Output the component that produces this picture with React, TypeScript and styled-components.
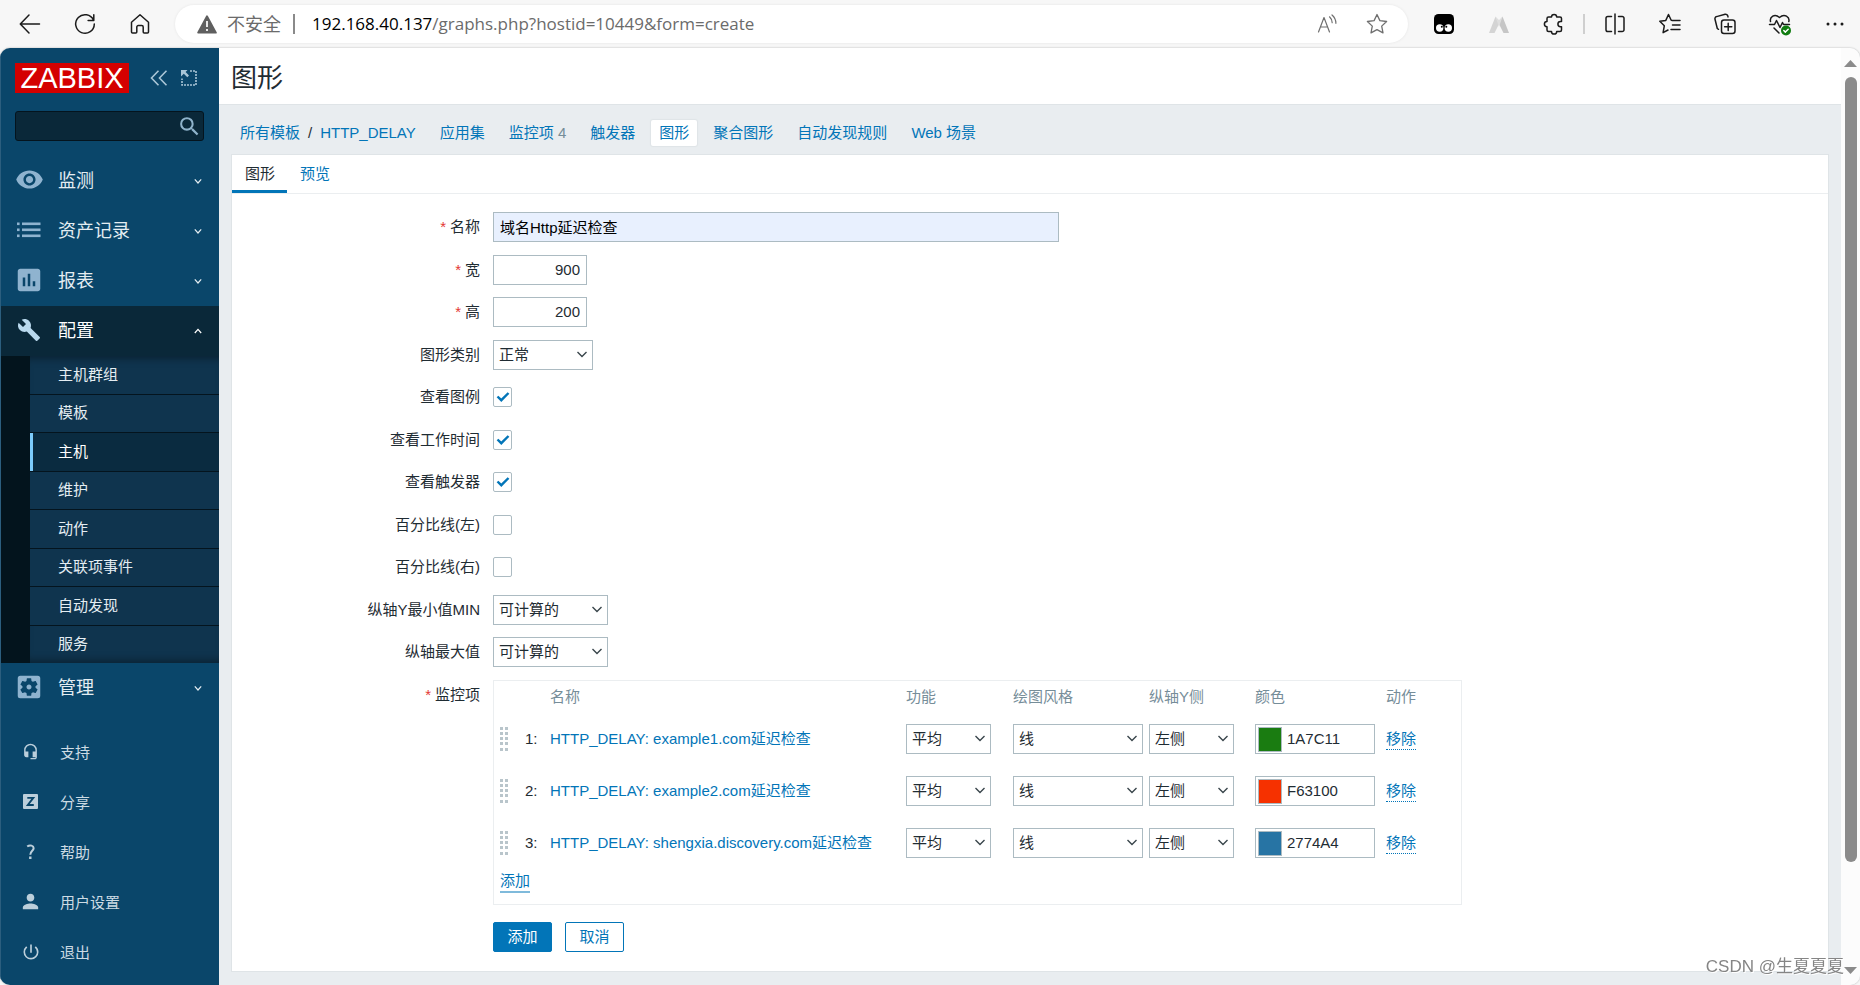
import React from "react";
import styled, { createGlobalStyle, css } from "styled-components";
import {
  MdVisibility,
  MdAssessment,
  MdBuild,
  MdSettingsApplications,
  MdHeadsetMic,
  MdPerson,
  MdPowerSettingsNew,
  MdSearch,
} from "react-icons/md";

const sans = `"Liberation Sans", "Noto Sans CJK SC", sans-serif`;
const chromeFont = `"Open Sans", "Noto Sans CJK SC", sans-serif`;

const GlobalStyle = createGlobalStyle`
  * { box-sizing: border-box; }
  body { margin: 0; background: #f7f7f7; font: 15px/20px ${sans}; color: #1f2c33; }
  button, input, select { font: inherit; color: inherit; margin: 0; }
  a { color: #0275b8; text-decoration: none; }
  svg { display: block; flex: none; }
`;

/* ---------- browser chrome ---------- */

const Window = styled.div`
  display: flex;
  flex-direction: column;
  min-height: 100vh;
`;

const Toolbar = styled.header`
  display: flex;
  align-items: center;
  height: 48px;
  padding: 0 7px 0 11px;
  background: #f7f7f7;
  color: #1b1b1b;
`;

const IconButton = styled.button`
  display: flex;
  align-items: center;
  justify-content: center;
  width: 37px;
  height: 36px;
  padding: 0;
  border: 0;
  background: none;
  color: inherit;
`;

const ButtonGroup = styled.div`
  display: flex;
  align-items: center;
  gap: 18px;
`;

const AddressBar = styled.div`
  display: flex;
  align-items: center;
  flex: 1;
  height: 38px;
  margin: 0 17px;
  padding: 0 13px 0 22px;
  border-radius: 19px;
  background: #fff;
  box-shadow: 0 0 3px rgba(0, 0, 0, 0.08);
  font: 17px/24px ${chromeFont};
  color: #6b6b6b;
`;

const Security = styled.span`
  display: flex;
  align-items: center;
  gap: 10px;
  font-size: 18px;
`;

const Divider = styled.span`
  width: 2px;
  height: 20px;
  margin: 0 11px;
  background: #cfcfcf;
`;

const UrlDivider = styled(Divider)`
  margin: 0 17px 0 12px;
  background: #8a8a8a;
`;

const Url = styled.span`
  flex: 1;
  white-space: nowrap;
  b { font-weight: 400; color: #000; }
`;

const AddressTools = styled.div`
  display: flex;
  gap: 12px;
  color: #6f6f6f;
`;

const Viewport = styled.div`
  display: flex;
  flex: 1;
  border-radius: 10px;
  overflow: hidden;
  background: #e9edf0;
  box-shadow: 0 0 2px rgba(0, 0, 0, 0.3);
`;

const Scrollbar = styled.div`
  display: flex;
  flex-direction: column;
  align-items: center;
  justify-content: space-between;
  width: 19px;
  padding: 12px 0 11px;
  background: #fcfcfc;
  color: #8b8b8b;
`;

const ScrollTrack = styled.div`
  flex: 1;
  width: 12px;
  margin: 10px 0 8px;
`;

const ScrollThumb = styled.div`
  height: 89%;
  border-radius: 6px;
  background: #8b8b8b;
`;

/* ---------- sidebar ---------- */

const Sidebar = styled.aside`
  display: flex;
  flex-direction: column;
  width: 219px;
  flex: none;
  border-left: 1px solid #2c5e7e;
  background: #0a466a;
  color: #fff;
`;

const Brand = styled.div`
  display: flex;
  align-items: center;
  height: 30px;
  margin: 15px 14px 18px;
  color: #a9c5d6;
`;

const Logo = styled.a`
  flex: none;
  width: 114px;
  height: 30px;
  margin-right: 15px;
  background: #d40000;
  color: #fff;
  font-size: 29px;
  line-height: 30px;
  text-align: center;
`;

const BrandButton = styled(IconButton)`
  width: 30px;
  height: 30px;
`;

const SearchBox = styled.form`
  display: flex;
  align-items: center;
  height: 30px;
  margin: 0 15px 0 14px;
  border: 1px solid #04141e;
  border-radius: 3px;
  background: #0a2839;
  color: #8fb3cb;
  input {
    flex: 1;
    min-width: 0;
    padding: 0 8px;
    border: 0;
    background: none;
    outline: none;
  }
`;

const SearchButton = styled(IconButton)`
  width: 28px;
  height: 28px;
`;

const Menu = styled.ul`
  margin: 15px 0;
  padding: 0;
  list-style: none;
`;

const MenuLink = styled.a<{ $open?: boolean }>`
  display: flex;
  align-items: center;
  height: 50px;
  padding: 0 17px 0 14px;
  background: ${(p) => (p.$open ? "#0a2839" : "transparent")};
  color: ${(p) => (p.$open ? "#fff" : "#e4edf2")};
  font-size: 18px;
  line-height: 24px;
  span:first-child {
    display: flex;
    justify-content: center;
    width: 28px;
    margin-right: 15px;
    padding-bottom: 3px;
    color: ${(p) => (p.$open ? "#b9d9ee" : "#8fb3cf")};
  }
  > svg { margin-left: auto; }
`;

const SubMenu = styled.ul`
  display: flex;
  flex-direction: column;
  height: 307px;
  margin: 0;
  padding: 0 0 0 29px;
  list-style: none;
  background: #03141d;
`;

const SubItem = styled.li<{ $active?: boolean }>`
  flex: 1;
  background: ${(p) => (p.$active ? "#0a2b40" : "#0f344e")};
  & + & { border-top: 1px solid #04141e; }
  &:first-child { box-shadow: inset 0 8px 8px -6px rgba(0, 0, 0, 0.4); }
  &:last-child { box-shadow: inset 0 -8px 8px -6px rgba(0, 0, 0, 0.4); }
  a {
    display: flex;
    align-items: center;
    height: 100%;
    padding-left: 25px;
    border-left: 3px solid ${(p) => (p.$active ? "#7ccbfb" : "transparent")};
    color: ${(p) => (p.$active ? "#fff" : "#e4edf2")};
  }
`;

const UserMenu = styled.ul`
  margin: 0 0 7px;
  padding: 0;
  list-style: none;
  a {
    display: flex;
    align-items: center;
    height: 50px;
    padding-left: 18px;
    color: #cddbe4;
  }
  span:first-child {
    display: flex;
    justify-content: center;
    width: 23px;
    margin-right: 18px;
    padding-bottom: 3px;
    color: #bccfdb;
  }
`;

/* ---------- main area ---------- */

const Main = styled.main`
  display: flex;
  flex-direction: column;
  flex: 1;
  min-width: 0;
`;

const PageHeader = styled.div`
  height: 57px;
  padding: 13px 12px;
  border-bottom: 1px solid #dfe4e7;
  background: #fff;
  h1 {
    margin: 0;
    font-size: 26px;
    line-height: 34px;
    font-weight: 400;
  }
`;

const FilterNav = styled.nav`
  display: flex;
  align-items: center;
  gap: 8px;
  height: 26px;
  margin: 15px 13px 8px;
`;

const NavLink = styled.a<{ $active?: boolean }>`
  padding: 3px 8px;
  border-radius: 2px;
  white-space: nowrap;
  ${(p) =>
    p.$active &&
    css`
      background: #fff;
      box-shadow: 0 0 1px 1px #dfe4e7;
    `}
  small { font-size: 15px; color: #768d99; }
`;

const Crumbs = styled.span`
  display: flex;
  gap: 8px;
  padding: 0 8px;
  white-space: nowrap;
`;

const Card = styled.section`
  flex: 1;
  margin: 0 12px 13px;
  padding-bottom: 18px;
  border: 1px solid #dfe4e7;
  background: #fff;
`;

const Tabs = styled.div`
  display: flex;
  height: 39px;
  border-bottom: 1px solid #ebeef0;
`;

const Tab = styled.button<{ $active?: boolean }>`
  height: 38px;
  padding: 3px 12px 0 13px;
  border: 0;
  border-bottom: 3px solid ${(p) => (p.$active ? "#0275b8" : "transparent")};
  background: none;
  color: ${(p) => (p.$active ? "#1f2c33" : "#0275b8")};
`;

const Form = styled.form`
  padding-top: 18px;
`;

const Row = styled.div`
  display: grid;
  grid-template-columns: 248px minmax(0, 1fr);
  column-gap: 13px;
  min-height: 30px;
  margin-bottom: 12px;
  &:nth-child(odd) { margin-bottom: 13px; }
  &:nth-last-child(2) { margin-bottom: 17px; }
  &:last-child { margin-bottom: 0; }
`;

const Field = styled.div`
  display: flex;
  align-items: center;
  gap: 13px;
`;

const labelStyle = css<{ $required?: boolean }>`
  line-height: 30px;
  height: 30px;
  text-align: right;
  white-space: nowrap;
  ${(p) =>
    p.$required &&
    css`
      &::before {
        content: "*";
        margin-right: 4px;
        color: #e33734;
      }
    `}
`;
const Label = styled.label<{ $required?: boolean }>`${labelStyle}`;
const Caption = styled.span<{ $required?: boolean }>`${labelStyle}`;

const TextInput = styled.input<{ $width: number; $filled?: boolean; $number?: boolean }>`
  width: ${(p) => p.$width}px;
  max-width: 100%;
  height: 30px;
  padding: 0 6px 1px;
  border: 1px solid #acbbc2;
  background: ${(p) => (p.$filled ? "#e8f0fe" : "#fff")};
  color: ${(p) => (p.$filled ? "#000" : "inherit")};
  text-align: ${(p) => (p.$number ? "right" : "left")};
`;

const SelectBox = styled.span<{ $width: number }>`
  display: grid;
  width: ${(p) => p.$width}px;
  height: 30px;
  align-items: center;
  > * { grid-area: 1 / 1; }
  select {
    width: 100%;
    height: 30px;
    padding: 0 5px;
    border: 1px solid #acbbc2;
    border-radius: 0;
    background: #fff;
    appearance: none;
  }
  svg { justify-self: end; margin-right: 5px; pointer-events: none; }
`;

const CheckBox = styled.span`
  display: grid;
  place-items: center;
  > * { grid-area: 1 / 1; }
  input {
    width: 19px;
    height: 20px;
    border: 1px solid #acbbc2;
    border-radius: 2px;
    background: #fff;
    appearance: none;
  }
  svg { visibility: hidden; pointer-events: none; }
  input:checked + svg { visibility: visible; }
`;

const ItemsPanel = styled.div`
  width: 969px;
  max-width: 100%;
  min-height: 225px;
  padding: 0 6px;
  border: 1px solid #ebeef0;
`;

const ItemsTable = styled.table`
  width: 100%;
  table-layout: fixed;
  border-collapse: collapse;
  th {
    height: 32px;
    padding: 0;
    color: #768d99;
    font-weight: 400;
    text-align: left;
    vertical-align: middle;
  }
  td { height: 52px; padding: 0; vertical-align: middle; }
  tfoot td { height: 26px; }
`;

const ColorField = styled.label`
  display: flex;
  align-items: center;
  width: 120px;
  height: 30px;
  padding: 0 2px;
  border: 1px solid #acbbc2;
  input {
    flex: 1;
    min-width: 0;
    padding: 0 5px;
    border: 0;
    background: none;
  }
`;

const Swatch = styled.span<{ $color: string }>`
  width: 24px;
  height: 25px;
  border: 1px solid #acbbc2;
  background: #${(p) => p.$color};
`;

const TextButton = styled.button<{ $solid?: boolean }>`
  padding: 0;
  border: 0;
  border-bottom: ${(p) => (p.$solid ? "2px solid #7fbadb" : "1px dotted #0275b8")};
  background: none;
  color: #0275b8;
`;

const ActionButton = styled.button<{ $primary?: boolean }>`
  width: 59px;
  height: 30px;
  padding: 0;
  border: 1px solid #0275b8;
  border-radius: 2px;
  background: ${(p) => (p.$primary ? "#0275b8" : "#fff")};
  color: ${(p) => (p.$primary ? "#fff" : "#0275b8")};
`;

const Watermark = styled.div`
  position: fixed;
  right: 16px;
  bottom: 6px;
  color: #858585;
  font-size: 17px;
  line-height: 24px;
  text-shadow: 1px 1px 0 #fff;
  pointer-events: none;
`;

/* ---------- drawings ---------- */

type LineIconProps = { size?: number; width?: number; children: React.ReactNode };
const LineIcon = ({ size = 24, width = 1.5, children }: LineIconProps) => (
  <svg width={size} height={size} viewBox="0 0 24 24" fill="none" stroke="currentColor" strokeWidth={width} strokeLinecap="round" strokeLinejoin="round" aria-hidden="true">
    {children}
  </svg>
);

const Chevron = ({ up = false, size = 8 }: { up?: boolean; size?: number }) => (
  <svg width={size} height={size} viewBox="0 0 10 10" fill="none" stroke="currentColor" strokeWidth="1.5" aria-hidden="true">
    <path d={up ? "M1 7.5 5 3l4 4.5" : "M1 3l4 4.5L9 3"} />
  </svg>
);

const SelectArrow = () => (
  <svg width="12" height="12" viewBox="0 0 12 12" fill="none" stroke="#3a464c" strokeWidth="1.4" aria-hidden="true">
    <path d="M1.500 3 6 7.500 10.500 3" />
  </svg>
);

const CheckMark = () => (
  <svg width="14" height="12" viewBox="0 0 14 12" fill="none" stroke="#0275b8" strokeWidth="2.4" aria-hidden="true">
    <path d="M1.5 5.5 5.3 9.2 12.5 2" />
  </svg>
);

const ListIcon = () => (
  <svg width="24" height="16" viewBox="0 0 24 16" fill="currentColor" aria-hidden="true">
    {[1, 7, 13].map((y) => (
      <g key={y}>
        <rect x="0" y={y - 0.5} width="2.6" height="2.6" />
        <rect x="5" y={y - 0.5} width="18.5" height="2.6" />
      </g>
    ))}
  </svg>
);

const ShareIcon = () => (
  <svg width="15" height="15" viewBox="0 0 15 15" aria-hidden="true">
    <rect width="15" height="15" rx="1" fill="currentColor" />
    <path d="M4.3 3.9h6L4.8 11h6" fill="none" stroke="#0a466a" strokeWidth="1.9" />
  </svg>
);

const QuestionIcon = () => (
  <svg width="15" height="16" viewBox="0 0 15 16" fill="none" stroke="currentColor" strokeWidth="2" aria-hidden="true">
    <path d="M4.2 2.6C7 .3 10.8 1.6 10.6 4.4 10.5 6.8 7.3 7 7.3 10.8" />
    <path d="M6.1 13.8h2.4" strokeWidth="2.4" />
  </svg>
);

const DragHandle = () => (
  <svg width="8" height="24" viewBox="0 0 8 24" fill="#b9c5cb" aria-hidden="true">
    {[0, 5, 10, 15, 21].map((y) => (
      <g key={y}>
        <rect x="0" y={y} width="3" height="3" />
        <rect x="5" y={y} width="3" height="3" />
      </g>
    ))}
  </svg>
);

const CollapseIcon = () => (
  <svg width="18" height="16" viewBox="0 0 18 16" fill="none" stroke="currentColor" strokeWidth="1.6" aria-hidden="true">
    <path d="M8.5.8 1.5 8l7 7.2M16.5.8 9.5 8l7 7.2" />
  </svg>
);

const HideIcon = () => (
  <svg width="16" height="16" viewBox="0 0 16 16" fill="none" stroke="currentColor" aria-hidden="true">
    <path d="M9 1h6v14H1V8.5" strokeWidth="1.6" strokeDasharray="2 1" />
    <path d="M0 0h6.5L4.6 1.9 8 5.6 6.3 7.2 2.8 3.7 0 6.5Z" fill="currentColor" stroke="none" />
  </svg>
);

const WarningIcon = () => (
  <svg width="20" height="19" viewBox="0 0 20 19" aria-hidden="true">
    <path d="M10 1.2 18.9 17.6H1.1Z" fill="#5f5f5f" stroke="#5f5f5f" strokeWidth="1.8" strokeLinejoin="round" />
    <path d="M10 6v6M10 14v2" stroke="#fff" strokeWidth="1.7" />
  </svg>
);

const BackIcon = () => <LineIcon><path d="M21.5 12H2.5M11 3 2.3 12 11 21" /></LineIcon>;
const ReloadIcon = () => <LineIcon><path d="M20.5 8.2A9.3 9.3 0 1 0 21.3 12M20.8 2.8v5.7h-5.7" /></LineIcon>;
const HomeIcon = () => (
  <LineIcon>
    <path d="M3.5 10.2 12 2.8l8.5 7.4V20a1 1 0 0 1-1 1h-3.3a1 1 0 0 1-1-1v-5a1.500 1.500 0 0 0-1.500-1.500h-3.400A1.500 1.500 0 0 0 8.800 15v5a1 1 0 0 1-1 1H4.500a1 1 0 0 1-1-1Z" />
  </LineIcon>
);
const ReadAloudIcon = () => (
  <LineIcon width={1.2}>
    <path d="M2.5 20 8 5.500 13.500 20M4.500 15h7M13.500 4.800c1.700 1.600 2.700 3.500 2.700 5.900M16 3c2.600 2.200 3.900 5 3.900 8.300" />
  </LineIcon>
);
const StarIcon = () => (
  <LineIcon width={1.3}>
    <path d="m12 2.500 2.900 6.100 6.700.9-4.900 4.600 1.300 6.800-6-3.300-6 3.300 1.300-6.800L2.400 9.500l6.700-.9Z" />
  </LineIcon>
);
const ReaderIcon = () => (
  <svg width="20" height="20" viewBox="0 0 20 20" aria-hidden="true">
    <rect width="20" height="20" rx="4.5" fill="#000" />
    <circle cx="5.7" cy="14" r="3.7" fill="#fff" />
    <circle cx="14.3" cy="14" r="3.7" fill="#fff" />
    <circle cx="7.8" cy="12.700" r="1" fill="#000" />
    <circle cx="12.3" cy="12.700" r="1" fill="#000" />
  </svg>
);
const PeakIcon = () => (
  <svg width="20" height="18" viewBox="0 0 20 18" aria-hidden="true">
    <path d="M6.500 1.500 10 9 5.500 18H0Z" fill="#d4d4d4" />
    <path d="M13.500 1.500 10 9l4.500 9H20Z" fill="#c6c6c6" />
    <path d="M6.500 1.500 10 5l3.500-3.500L10 12Z" fill="#dedede" />
  </svg>
);
const PuzzleIcon = () => (
  <LineIcon>
    <path d="M6.500 5h3a2.600 2.600 0 0 1 5.200 0H18a1.500 1.500 0 0 1 1.500 1.500V9.500h-1a2.600 2.600 0 0 0 0 5.200h1V18a1.500 1.500 0 0 1-1.500 1.500h-3.300a2.600 2.600 0 0 1-5.200 0h-3A1.500 1.500 0 0 1 5 18v-3.300a2.600 2.600 0 0 1 0-5.200v-3A1.500 1.500 0 0 1 6.500 5Z" />
  </LineIcon>
);
const SplitIcon = () => (
  <LineIcon><path d="M12 2v20M8.5 4.5H4.8A1.800 1.800 0 0 0 3 6.300v11.400a1.800 1.800 0 0 0 1.800 1.800h3.700M15.500 4.500h3.700A1.800 1.800 0 0 1 21 6.300v11.400a1.800 1.800 0 0 1-1.800 1.800h-3.700" /></LineIcon>
);
const FavoritesIcon = () => (
  <LineIcon><path d="M14 8.500h8M13.200 8.300 10.500 2.500 7.800 8.400l-6 .9 4.500 4.500-1.200 6.900 4.900-2.700M14.500 13H22M13 17.500h9" /></LineIcon>
);
const CollectionsIcon = () => (
  <LineIcon>
    <rect x="8.5" y="8" width="13.500" height="13.500" rx="2.500" />
    <path d="M15.200 11.200v7.200M11.600 14.800h7.200M5.500 17.300 4.300 16.500 2 7.300a2.200 2.200 0 0 1 1.600-2.700l8.500-2.300a2.200 2.200 0 0 1 2.700 1.600l.2 1" />
  </LineIcon>
);
const HealthIcon = () => (
  <LineIcon>
    <path d="M2.500 9.500C1.500 5 6.500 1 11.500 5.500 16.500 1 22 5 20.800 9.500M1.500 12.500h5l2-4 3.500 7 2.500-5 1 2h6M6 16l5 5" />
    <circle cx="18" cy="18.500" r="5" fill="#107c10" stroke="none" />
    <path d="m15.800 18.500 1.600 1.600 2.800-2.900" stroke="#fff" />
  </LineIcon>
);
const MoreIcon = () => (
  <svg width="18" height="4" viewBox="0 0 18 4" fill="currentColor" aria-hidden="true">
    <circle cx="2" cy="2" r="1.500" /><circle cx="9" cy="2" r="1.500" /><circle cx="16" cy="2" r="1.500" />
  </svg>
);

/* ---------- data ---------- */

const sections = [
  { text: "监测", icon: <MdVisibility size={29} /> },
  { text: "资产记录", icon: <ListIcon /> },
  { text: "报表", icon: <MdAssessment size={30} /> },
];
const configPages = ["主机群组", "模板", "主机", "维护", "动作", "关联项事件", "自动发现", "服务"];
const userLinks = [
  { text: "支持", icon: <MdHeadsetMic size={17} /> },
  { text: "分享", icon: <ShareIcon /> },
  { text: "帮助", icon: <QuestionIcon /> },
  { text: "用户设置", icon: <MdPerson size={23} /> },
  { text: "退出", icon: <MdPowerSettingsNew size={20} /> },
];
const checks = [
  { id: "legend", text: "查看图例", on: true },
  { id: "worktime", text: "查看工作时间", on: true },
  { id: "triggers", text: "查看触发器", on: true },
  { id: "pleft", text: "百分比线(左)", on: false },
  { id: "pright", text: "百分比线(右)", on: false },
];
const items = [
  { name: "HTTP_DELAY: example1.com延迟检查", color: "1A7C11" },
  { name: "HTTP_DELAY: example2.com延迟检查", color: "F63100" },
  { name: "HTTP_DELAY: shengxia.discovery.com延迟检查", color: "2774A4" },
];
const columns = [25, 25, 356, 107, 136, 106, 131, 69];

type SelectProps = { value: string; width: number; id?: string; label?: string };
const Select = ({ value, width, id, label }: SelectProps) => (
  <SelectBox $width={width}>
    <select id={id} aria-label={label}><option>{value}</option></select>
    <SelectArrow />
  </SelectBox>
);

const BrowserBar = () => (
  <Toolbar>
    <ButtonGroup>
      <IconButton aria-label="返回"><BackIcon /></IconButton>
      <IconButton aria-label="刷新"><ReloadIcon /></IconButton>
      <IconButton aria-label="主页"><HomeIcon /></IconButton>
    </ButtonGroup>
    <AddressBar>
      <Security><WarningIcon />不安全</Security>
      <UrlDivider />
      <Url><b>192.168.40.137</b>/graphs.php?hostid=10449&amp;form=create</Url>
      <AddressTools>
        <IconButton aria-label="朗读"><ReadAloudIcon /></IconButton>
        <IconButton aria-label="收藏"><StarIcon /></IconButton>
      </AddressTools>
    </AddressBar>
    <ButtonGroup>
      <IconButton aria-label="阅读扩展"><ReaderIcon /></IconButton>
      <IconButton aria-label="代理扩展"><PeakIcon /></IconButton>
      <IconButton aria-label="扩展"><PuzzleIcon /></IconButton>
    </ButtonGroup>
    <Divider />
    <ButtonGroup>
      <IconButton aria-label="分屏"><SplitIcon /></IconButton>
      <IconButton aria-label="收藏夹"><FavoritesIcon /></IconButton>
      <IconButton aria-label="集锦"><CollectionsIcon /></IconButton>
      <IconButton aria-label="性能"><HealthIcon /></IconButton>
      <IconButton aria-label="更多"><MoreIcon /></IconButton>
    </ButtonGroup>
  </Toolbar>
);

const SideNav = () => (
  <Sidebar>
    <Brand>
      <Logo href="#">ZABBIX</Logo>
      <BrandButton aria-label="折叠侧栏"><CollapseIcon /></BrandButton>
      <BrandButton aria-label="隐藏侧栏"><HideIcon /></BrandButton>
    </Brand>
    <SearchBox>
      <input aria-label="搜索" />
      <SearchButton type="button" aria-label="搜索"><MdSearch size={25} /></SearchButton>
    </SearchBox>
    <Menu>
      {sections.map((m) => (
        <li key={m.text}>
          <MenuLink href="#"><span>{m.icon}</span>{m.text}<Chevron /></MenuLink>
        </li>
      ))}
      <li>
        <MenuLink href="#" $open><span><MdBuild size={24} /></span>配置<Chevron up /></MenuLink>
        <SubMenu>
          {configPages.map((p) => (
            <SubItem key={p} $active={p === "主机"}><a href="#">{p}</a></SubItem>
          ))}
        </SubMenu>
      </li>
      <li>
        <MenuLink href="#"><span><MdSettingsApplications size={30} /></span>管理<Chevron /></MenuLink>
      </li>
    </Menu>
    <UserMenu>
      {userLinks.map((u) => (
        <li key={u.text}><a href="#"><span>{u.icon}</span>{u.text}</a></li>
      ))}
    </UserMenu>
  </Sidebar>
);

const GraphForm = () => (
  <Form>
    <Row>
      <Label htmlFor="name" $required>名称</Label>
      <Field><TextInput id="name" $width={566} $filled defaultValue="域名Http延迟检查" /></Field>
    </Row>
    <Row>
      <Label htmlFor="width" $required>宽</Label>
      <Field><TextInput id="width" $width={94} $number defaultValue="900" /></Field>
    </Row>
    <Row>
      <Label htmlFor="height" $required>高</Label>
      <Field><TextInput id="height" $width={94} $number defaultValue="200" /></Field>
    </Row>
    <Row>
      <Label htmlFor="type">图形类别</Label>
      <Field><Select id="type" width={100} value="正常" /></Field>
    </Row>
    {checks.map((c) => (
      <Row key={c.id}>
        <Label htmlFor={c.id}>{c.text}</Label>
        <Field>
          <CheckBox><input id={c.id} type="checkbox" defaultChecked={c.on} /><CheckMark /></CheckBox>
        </Field>
      </Row>
    ))}
    <Row>
      <Label htmlFor="ymin">纵轴Y最小值MIN</Label>
      <Field><Select id="ymin" width={115} value="可计算的" /></Field>
    </Row>
    <Row>
      <Label htmlFor="ymax">纵轴最大值</Label>
      <Field><Select id="ymax" width={115} value="可计算的" /></Field>
    </Row>
    <Row>
      <Caption $required>监控项</Caption>
      <ItemsPanel>
        <ItemsTable>
          <colgroup>{columns.map((w, i) => <col key={i} width={w} />)}</colgroup>
          <thead>
            <tr>
              <th /><th /><th>名称</th><th>功能</th><th>绘图风格</th><th>纵轴Y侧</th><th>颜色</th><th>动作</th>
            </tr>
          </thead>
          <tbody>
            {items.map((it, i) => (
              <tr key={it.name}>
                <td><DragHandle /></td>
                <td>{i + 1}:</td>
                <td><a href="#">{it.name}</a></td>
                <td><Select width={85} value="平均" label="功能" /></td>
                <td><Select width={130} value="线" label="绘图风格" /></td>
                <td><Select width={85} value="左侧" label="纵轴Y侧" /></td>
                <td>
                  <ColorField>
                    <Swatch $color={it.color} />
                    <input aria-label="颜色" defaultValue={it.color} />
                  </ColorField>
                </td>
                <td><TextButton type="button">移除</TextButton></td>
              </tr>
            ))}
          </tbody>
          <tfoot>
            <tr><td colSpan={8}><TextButton type="button" $solid>添加</TextButton></td></tr>
          </tfoot>
        </ItemsTable>
      </ItemsPanel>
    </Row>
    <Row>
      <span />
      <Field>
        <ActionButton type="button" $primary>添加</ActionButton>
        <ActionButton type="button">取消</ActionButton>
      </Field>
    </Row>
  </Form>
);

export default function App() {
  return (
    <Window>
      <GlobalStyle />
      <BrowserBar />
      <Viewport>
        <SideNav />
        <Main>
          <PageHeader><h1>图形</h1></PageHeader>
          <FilterNav>
            <Crumbs><a href="#">所有模板</a><span>/</span><a href="#">HTTP_DELAY</a></Crumbs>
            <NavLink href="#">应用集</NavLink>
            <NavLink href="#">监控项 <small>4</small></NavLink>
            <NavLink href="#">触发器</NavLink>
            <NavLink href="#" $active>图形</NavLink>
            <NavLink href="#">聚合图形</NavLink>
            <NavLink href="#">自动发现规则</NavLink>
            <NavLink href="#">Web 场景</NavLink>
          </FilterNav>
          <Card>
            <Tabs>
              <Tab type="button" $active>图形</Tab>
              <Tab type="button">预览</Tab>
            </Tabs>
            <GraphForm />
          </Card>
        </Main>
        <Scrollbar>
          <svg width="13" height="7" viewBox="0 0 13 7" fill="currentColor" aria-hidden="true"><path d="M6.500 0 13 7H0Z" /></svg>
          <ScrollTrack><ScrollThumb /></ScrollTrack>
          <svg width="13" height="7" viewBox="0 0 13 7" fill="currentColor" aria-hidden="true"><path d="M0 0h13L6.500 7Z" /></svg>
        </Scrollbar>
      </Viewport>
      <Watermark>CSDN @生夏夏夏</Watermark>
    </Window>
  );
}
